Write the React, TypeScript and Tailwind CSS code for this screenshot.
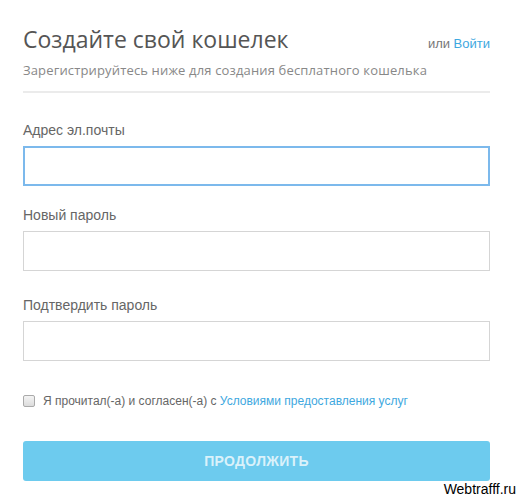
export default function App() {
    const fields = [
        { label: "Адрес эл.почты", gap: "mt-0", active: true },
        { label: "Новый пароль", gap: "mt-[20px]", active: false },
        { label: "Подтвердить пароль", gap: "mt-[25px]", active: false },
    ]

    return (
        <div className="relative w-[520px] h-[498px] bg-white overflow-hidden font-['Liberation_Sans',Arial,sans-serif]">
            <div className="ml-[23px] w-[467px] pt-[23px]">
                <div className="flex items-baseline justify-between">
                    <h1 className="font-['Open_Sans',sans-serif] text-[23px] leading-[32px] text-[#555]">Создайте свой кошелек</h1>
                    <div className="text-[13px] text-[#777]">
                        или <span className="text-[#3ea8e0]">Войти</span>
                    </div>
                </div>
                <p className="mt-[6px] font-['Open_Sans',sans-serif] text-[13px] leading-[18px] tracking-[0.15px] text-[#888]">
                    Зарегистрируйтесь ниже для создания бесплатного кошелька
                </p>
                <div className="mt-[12px] h-[2px] bg-[#ebebeb]" />

                <div className="mt-[28px]">
                    {fields.map((field, index) => (
                        <div key={index} className={field.gap}>
                            <div className="text-[14px] leading-[18px] text-[#666] mb-[7px]">{field.label}</div>
                            <div className={`h-[40px] w-full ${field.active ? "border-[2px] border-[#7cb9ec]" : "border border-[#d5d5d5]"}`} />
                        </div>
                    ))}
                </div>

                <div className="mt-[33px] h-[14px] flex items-center gap-[8px] text-[12px] text-[#666]">
                    <div className="w-[12px] h-[12px] rounded-[2px] border border-[#aaa] bg-gradient-to-b from-[#f4f4f4] to-[#dcdcdc]" />
                    <span>
                        Я прочитал(-а) и согласен(-а) с <span className="text-[#3ea8e0]">Условиями предоставления услуг</span>
                    </span>
                </div>

                <div className="mt-[33px] h-[40px] rounded-[3px] bg-[#6dcbee] flex items-center justify-center text-[14px] font-bold text-white/75 tracking-[0.3px]">
                    ПРОДОЛЖИТЬ
                </div>
            </div>
            <div className="absolute right-[4px] bottom-[0px] text-[14px] leading-[17px] text-black">Webtrafff.ru</div>
        </div>
    )
}
